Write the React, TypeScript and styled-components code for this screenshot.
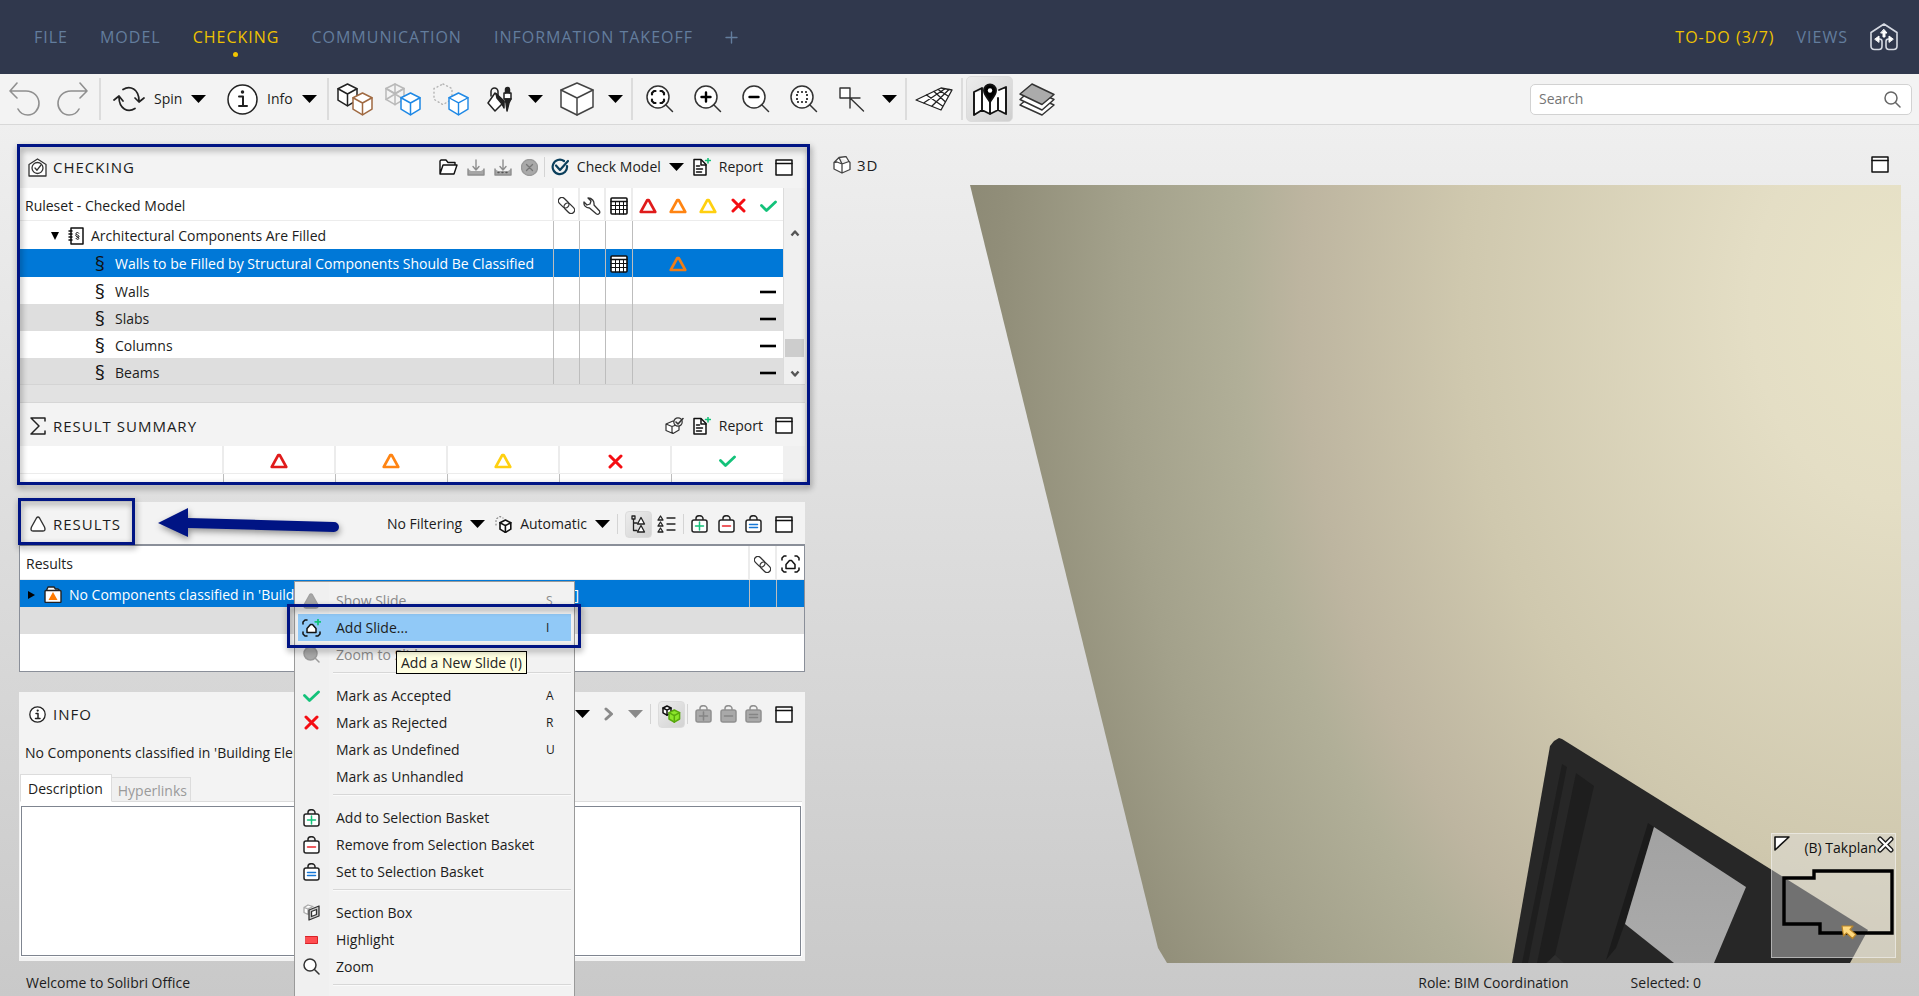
import React from "react";
import styled, { createGlobalStyle, css } from "styled-components";

const navy = "#001484";
const ink = "#1c1c20";

const GlobalStyle = createGlobalStyle`
  *, *::before, *::after { box-sizing: border-box; }
  body {
    margin: 0;
    font-family: "Open Sans", "Noto Sans", sans-serif;
    font-size: 14px;
    line-height: 20px;
    color: ${ink};
  }
  button, input, textarea { font: inherit; color: inherit; }
  button { background: none; border: 0; padding: 0; margin: 0; cursor: default; }
  svg { display: block; flex: none; }
`;

/* ---------- Icons ---------- */

type IconProps = { size?: number; color?: string };

const Svg = ({
  w,
  h = w,
  children,
  sw = 1.5,
  color = "#222",
}: {
  w: number;
  h?: number;
  children: React.ReactNode;
  sw?: number;
  color?: string;
}) => (
  <svg
    width={w}
    height={h}
    viewBox={`0 0 ${w} ${h}`}
    fill="none"
    stroke={color}
    strokeWidth={sw}
    strokeLinecap="round"
    strokeLinejoin="round"
    aria-hidden="true"
  >
    {children}
  </svg>
);

const UndoIcon = () => (
  <Svg w={32} h={36} color="#8f8f8f" sw={1.6}>
    <path d="M8 2 1 10l7 7M1 10h16c8 0 13 6 13 12.500 0 6-5 11.500-11 11.500-5 0-8-2-10-6" />
  </Svg>
);
const RedoIcon = () => (
  <Svg w={32} h={36} color="#8f8f8f" sw={1.6}>
    <path d="m24 2 7 8-7 7M31 10H15C7 10 2 16 2 22.500 2 28.500 7 34 13 34c5 0 8-2 10-6" />
  </Svg>
);
const SpinIcon = () => (
  <Svg w={32} h={26} sw={1.7}>
    <path d="M10 3.500C17-1 26 3 26 15M22 12l4 4 5-4M22 22.500C15 27 6 23 6 11M1 14l5-4 4 5" />
  </Svg>
);
const InfoBigIcon = () => (
  <Svg w={31}>
    <circle cx="15.500" cy="15.500" r="14.500" fill="#fff" />
    <path d="M12 12.500h4V22M12 22h8" strokeWidth="2" />
    <circle cx="15.500" cy="8" r="1" fill="#222" />
  </Svg>
);
const Caret = ({ color = "#000" }: IconProps) => (
  <svg width="15" height="8" viewBox="0 0 15 8" fill={color} aria-hidden="true">
    <path d="M0 0h15L7.500 8z" />
  </svg>
);

const Cube = ({
  x,
  y,
  s,
  stroke = "#222",
  fill = "#fff",
  dash,
  inner = true,
}: {
  x: number;
  y: number;
  s: number;
  stroke?: string;
  fill?: string;
  dash?: string;
  inner?: boolean;
}) => (
  <g transform={`translate(${x} ${y}) scale(${s})`} stroke={stroke} fill={fill} strokeDasharray={dash}>
    <path vectorEffect="non-scaling-stroke" d="M10 0 20 5v12l-10 6L0 17V5z" />
    {inner && <path vectorEffect="non-scaling-stroke" d="M0 5l10 5.500L20 5M10 10.500V23" fill="none" />}
  </g>
);

const CubesBrownIcon = () => (
  <Svg w={37} h={33}>
    <Cube x={1} y={1} s={0.95} />
    <Cube x={16} y={10} s={0.95} stroke="#a06a42" />
  </Svg>
);
const CubesGreyIcon = () => (
  <Svg w={37} h={33}>
    <Cube x={1} y={1} s={0.9} stroke="#b9b9b9" fill="#f4f4f4" />
    <path d="M1 5.500l18 11M19 5.500l-18 11M10 1v10" stroke="#b9b9b9" />
    <Cube x={16} y={10} s={0.95} stroke="#1e88e5" />
  </Svg>
);
const CubesDottedIcon = () => (
  <Svg w={37} h={33} sw={1.4}>
    <Cube x={1} y={1} s={0.9} stroke="#b4b4b4" fill="none" dash="1 3" inner={false} />
    <Cube x={16} y={10} s={0.95} stroke="#1e88e5" />
  </Svg>
);
const PaintIcon = () => (
  <Svg w={26} h={26} sw={1.5}>
    <path d="M4 10V5.500a3.500 3.500 0 0 1 7 0V14" />
    <path d="m8 7 9 9-9 9-7-8z" fill="#fff" />
    <path d="M9 7.500 17 15v7l-2-4-5-6z" fill="#222" />
    <rect x="17" y="7" width="7" height="6" fill="#fff" />
    <path d="M18.500 7V3.500a2 2 0 0 1 4 0V7M18 13l1 4 1 8 2-8 2-4z" fill="#222" />
  </Svg>
);
const BigCubeIcon = () => (
  <Svg w={36} h={34} sw={1.5} color="#444">
    <path d="M18 1 34 8v17l-16 8-16-8V8z" fill="#fff" />
    <path d="m2 8 16 8 16-8M18 16v17" />
  </Svg>
);

const Lens = ({ children }: { children?: React.ReactNode }) => (
  <Svg w={28} h={28} sw={1.5} color="#333">
    <circle cx="12" cy="12" r="11" fill="#fff" />
    <path d="m19.500 19.500 7 7" />
    {children}
  </Svg>
);
const ZoomFitIcon = () => (
  <Lens>
    <path
      d="M6 9.500V8l2-2h1.500M14.500 6H16l2 2v1.500M18 14.500V16l-2 2h-1.500M9.500 18H8l-2-2v-1.500"
      stroke="#111"
      strokeWidth="2.200"
    />
  </Lens>
);
const ZoomInIcon = () => (
  <Lens>
    <path d="M12 7.500v9M7.500 12h9" stroke="#000" strokeWidth="2.400" />
  </Lens>
);
const ZoomOutIcon = () => (
  <Lens>
    <path d="M7.500 12h9" stroke="#000" strokeWidth="2.400" />
  </Lens>
);
const ZoomAreaIcon = () => (
  <Lens>
    <rect x="7" y="7" width="10" height="10" stroke="#111" strokeWidth="1.600" strokeDasharray="2 2" strokeLinecap="butt" />
  </Lens>
);
const PickIcon = () => (
  <Svg w={26} h={25} color="#333" sw={1.4}>
    <path d="M1 1h10v10H1z" fill="#fff" />
    <path d="M11 11h10M11 11v10M11 11l13.500 13" />
  </Svg>
);
const GridIcon = () => (
  <Svg w={38} h={26} sw={1.3}>
    <path d="M1 14 26 2l11 2-11 20z" fill="#fff" />
    <path d="M9 16.800 30 2.800M17 20 34 3.500M19 5.500l11 10M11.500 9l16 11M23 3.500l10 6.500" />
  </Svg>
);
const MapIcon = () => (
  <Svg w={34} h={34} sw={1.9} color="#111">
    <path d="M1 10v23l8-5 8 4 8-4 8 4V5l-6 3z" fill="#fff" stroke="none" />
    <path d="M9 28V6L1 10v23l8-5 8 4V20M17 32l8-4V16M25 28l8 4V5l-7 3" />
    <path d="M17 20c-2-4-6-7-6-11.500A6 6 0 0 1 23 8.500C23 13 19 16 17 20z" fill="#000" />
    <circle cx="17" cy="8.500" r="2.200" fill="#fff" stroke="none" />
  </Svg>
);
const LayersIcon = () => (
  <Svg w={36} h={33} sw={1.5} color="#333">
    <path d="M1 22 13 12l22 10-12 10z" fill="#fff" />
    <path d="M1 16.500 13 6l22 10.500L23 27z" fill="#fff" />
    <path d="M1 11 13 1l22 10.500L23 21.500z" fill="#ababab" />
  </Svg>
);
const SearchIcon = ({ color = "#666" }: IconProps) => (
  <Svg w={17} color={color} sw={1.5}>
    <circle cx="7" cy="7" r="6" fill="#fff" />
    <path d="m11.500 11.500 4.500 4.500" />
  </Svg>
);
const LogoIcon = () => (
  <Svg w={28} h={28} color="#d5d9e2" sw={1.6}>
    <path d="M8 17v-1h1.500c2 0 2.500 1 2.500 2.500V23c0 2-1 3.500-3 3.500H4.500C2 26.500 1 25 1 23V9.500L14 1l13 8.500V23c0 2-1 3.500-3.500 3.500H19c-2 0-3-1.500-3-3.500v-4.500c0-1.500.5-2.500 2.500-2.500H20v1" />
    <path d="M14 6.500 17 10h-2v4h-2v-4h-2zM5 16l4-3v6zM23 16l-4-3v6z" fill="#fff" stroke="#fff" strokeWidth="1" />
  </Svg>
);
const WindowIcon = () => (
  <Svg w={18} h={17} color="#111" sw={1.5}>
    <path d="M1 1h16v15H1z" fill="#fff" />
    <path d="M1 4.500h16" />
  </Svg>
);
const ReportIcon = () => (
  <Svg w={18} h={18} color="#111" sw={1.5}>
    <path d="M1 1.500h7l5 5v10.500H1z" fill="#fff" />
    <path d="M8 2v5h5M3.500 8h3M3.500 11h6M3.500 14h5" />
    <path d="M15 0v5M12.500 2.500h5" stroke="#14c178" />
  </Svg>
);
const FolderIcon = () => (
  <Svg w={19} h={16} color="#111" sw={1.4}>
    <path d="M1 15V2l1-1h5l2 2.500h7V6M1 15 4 6h14l-3 9z" fill="#fff" />
  </Svg>
);
const DownloadIcon = ({ dots }: { dots?: boolean }) => (
  <Svg w={18} h={17} color="#8e8e8e" sw={1.4}>
    <path d="M1 10v6h16v-6l-3 2H4z" fill="#a6a6a6" stroke="none" />
    <path d="M1 10v6h16v-6M9 1v10M6 7.500 9 11l3-3.500" />
    {dots && <path d="M4 13.500h10" stroke="#555" strokeDasharray="1 3" />}
  </Svg>
);
const StopIcon = () => (
  <Svg w={17} color="#777" sw={1.3}>
    <circle cx="8.500" cy="8.500" r="8" fill="#a9a9a9" stroke="#999" />
    <path d="m5.500 5.500 6 6M11.500 5.500l-6 6" />
  </Svg>
);
const CheckCircleIcon = () => (
  <Svg w={18} color="#0b3f5c" sw={2.2}>
    <path d="M16 8a7.200 7.200 0 1 1-3-5" />
    <path d="m5 7.500 4 4.500 8-9" />
  </Svg>
);
const CheckingIcon = () => (
  <Svg w={19} h={19} color="#333" sw={1.3}>
    <path d="M1 6.500 9.500 1 18 6.500V18H1z" fill="#fff" />
    <circle cx="9.500" cy="10" r="5.500" />
    <path d="m7 10 2 2.200L13 7" />
  </Svg>
);
const SigmaIcon = () => (
  <Svg w={16} h={18} color="#222" sw={1.5}>
    <path d="M15 4V1H1l8 8-8 8h14v-3" />
  </Svg>
);
const Triangle = ({ color = "#e01b1b" }: IconProps) => (
  <Svg w={18} h={16} color={color} sw={2.6}>
    <path d="M8.300 2h1.400L16.300 14H1.700z" />
  </Svg>
);
const OutlineTriangle = ({ color = "#333", fill = "#fff" }: { color?: string; fill?: string }) => (
  <Svg w={16} h={16} color={color} sw={1.4}>
    <path d="M6.500 2Q8 0 9.500 2l5 9q1.500 4-1.500 4H3Q0 15 1.500 11z" fill={fill} />
  </Svg>
);
const CrossIcon = () => (
  <Svg w={15} h={15} color="#f40d12" sw={3}>
    <path d="m2 2 11 11M13 2 2 13" />
  </Svg>
);
const CheckIcon = () => (
  <Svg w={17} h={12} color="#13c27a" sw={2.8}>
    <path d="m1.500 5.500 5 5L15.500 2" />
  </Svg>
);
const LinkIcon = () => (
  <Svg w={17} h={17} color="#333" sw={1.3}>
    <g transform="rotate(45 8.500 8.500)">
      <rect x="-1.500" y="5" width="12" height="7" rx="3.500" />
      <rect x="6.500" y="5" width="12" height="7" rx="3.500" />
    </g>
  </Svg>
);
const WrenchIcon = () => (
  <Svg w={18} h={18} color="#333" sw={1.3}>
    <path d="M5 1 8 4 7 7 4 8 1 5c-.500 3 1.500 6 5.500 6l7 6c2 1 4-1 3-3L11 8c.500-4-2-7-6-7z" fill="#fff" />
  </Svg>
);
const TableIcon = () => (
  <Svg w={18} h={18} color="#111" sw={1}>
    <rect x="1" y="1" width="16" height="16" rx="1" fill="#fff" strokeWidth="1.600" />
    <path d="M1 4.500h16" strokeWidth="1.400" />
    <path d="M1 8.500h16M1 12.500h16M5.500 5v12M9.500 5v12M13.500 5v12" />
  </Svg>
);
const DashIcon = () => (
  <Svg w={18} h={4} color="#000" sw={2.6}>
    <path d="M1 2h16" strokeLinecap="butt" />
  </Svg>
);
const BookIcon = () => (
  <Svg w={16} h={18} color="#111" sw={1.5}>
    <rect x="3" y="1" width="12" height="16" fill="#fff" />
    <path d="M1 4h3M1 7h3M1 10h3M1 13h3" />
    <path
      d="M10.800 6.200c-.500-1.200-3-.900-2.800.5.200 1.200 3 1.300 3 2.700 0 1-1.500 1.300-2.200.6M8 7.500c-.8.800 0 1.800 1 2.200 1.500.8 2.200 1 1.800 2-.5 1-2.400.8-2.800-.3"
      strokeWidth="1"
    />
  </Svg>
);
const ModelCheckIcon = () => (
  <Svg w={19} h={17} color="#333" sw={1.2}>
    <path d="M1 7l7-3 6 3v6l-6 3.500L1 13.500zM1 7l6 2.500V16M7 9.500l7-2.500" fill="#fff" />
    <circle cx="13" cy="5" r="4.200" fill="#f4f4f4" />
    <path d="m11 5 2 2 5-5.500" strokeWidth="1.600" />
  </Svg>
);
const AutoCubeIcon = () => (
  <Svg w={17} h={17} color="#111" sw={1.6}>
    <path d="M1 9V3l4-2.500L8 2" stroke="#888" strokeDasharray="1 2.500" strokeWidth="1.200" />
    <Cube x={5} y={4} s={0.54} stroke="#111" />
  </Svg>
);
const TreeIcon = () => (
  <Svg w={15} h={18} color="#222" sw={1.3}>
    <path d="M2.500 4v11.500H6M2.500 8H6M1 1h3v3H1z" />
    <path d="M10 2.500 13.500 9h-7zM10 10.500l3.500 6.500h-7z" fill="#fff" />
  </Svg>
);
const ListIcon = () => (
  <Svg w={19} h={18} color="#222" sw={1.3}>
    <path d="M3.500 1 6 5H1zM3.500 7 6 11H1zM3.500 13 6 17H1zM10 3h8M10 9h8M10 15h8" />
  </Svg>
);
const BagIcon = ({ kind, disabled }: { kind: "add" | "remove" | "set"; disabled?: boolean }) => {
  const tone = disabled ? "#858585" : { add: "#13c27a", remove: "#e8262b", set: "#1677d6" }[kind];
  return (
    <Svg w={17} h={18} color={disabled ? "#909090" : "#222"} sw={1.5}>
      <path d="M5 5V3.500a3.500 2.800 0 0 1 7 0V5" />
      <rect x="1" y="5" width="15" height="12" rx="2" fill={disabled ? "#a9a9a9" : "#fff"} />
      {kind === "add" && <path d="M8.500 7v8M4.500 11h8" stroke={tone} />}
      {kind === "remove" && <path d="M4.500 11h8" stroke={tone} />}
      {kind === "set" && <path d="M4.500 9.500h8M4.500 12.500h8" stroke={tone} />}
    </Svg>
  );
};
const SlideIcon = ({ plus }: { plus?: boolean }) => (
  <Svg w={19} h={18} color="#111" sw={1.5}>
    <path d="M5 1H3L1 3v2M1 13v2l2 2h2M14 17h2l2-2v-2" />
    {!plus && <path d="M14 1h2l2 2v2" />}
    <path d="M5 9.500 8.500 5.500h2L14 9.500v4H5z" fill="#fff" />
    {plus && <path d="M16 0v5.500M13.200 2.800h5.600" stroke="#13c27a" strokeWidth="1.800" />}
  </Svg>
);
const ResultFolderIcon = () => (
  <Svg w={18} h={17} color="#222" sw={1.4}>
    <path d="M2.500 4.500 4 1h6l1.500 2H14l1.500 1.500" fill="#fff" />
    <rect x="1" y="4.500" width="16" height="12" rx="1" fill="#fff" />
    <path d="m9 6 4.500 8h-9z" fill="#ff7a00" stroke="none" />
  </Svg>
);
const InfoSmallIcon = () => (
  <Svg w={17} color="#222" sw={1.3}>
    <circle cx="8.500" cy="8.500" r="7.700" fill="#fff" />
    <path d="M7 7.500h2V12M6.500 12.500h4.500" strokeWidth="1.500" />
    <circle cx="8.700" cy="4.600" r=".5" fill="#222" />
  </Svg>
);
const ChevronRight = () => (
  <Svg w={10} h={14} color="#8a8a8a" sw={3}>
    <path d="m2 2 5.500 5L2 12" />
  </Svg>
);
const GreenCubesIcon = () => (
  <Svg w={19} h={18} sw={1.5}>
    <Cube x={1} y={1} s={0.4} stroke="#111" />
    <Cube x={7} y={5} s={0.53} stroke="#58a80e" fill="#8be52a" />
  </Svg>
);
const GreyLens = () => (
  <Svg w={17} color="#9a9a9a" sw={1.5}>
    <circle cx="7.500" cy="7.500" r="6.500" fill="#a9a9a9" />
    <path d="m12 12 4 4" />
  </Svg>
);
const SectionBoxIcon = () => (
  <Svg w={17} h={17} color="#333" sw={1.3}>
    <path d="M1 3.500 5 1l5 1.500M1 3.500v5l4 2V5zM5 5l4-2" stroke="#aaa" fill="#fff" />
    <path d="M6 6 16 2v10L6 16z" fill="#c9c9c9" />
    <path d="M8.500 7.500 13.500 5.500v5L8.500 12.500z" fill="#fff" />
  </Svg>
);
const HighlightIcon = () => (
  <Svg w={13} h={8} color="#d92227" sw={1}>
    <rect x=".5" y=".5" width="12" height="7" fill="#ff4d50" />
  </Svg>
);
const House3DIcon = () => (
  <Svg w={18} h={18} color="#444" sw={1.3}>
    <path d="M1 6.500 6 1.500l7-1 3 5 1 1v7l-8 3.500L1 13zM6 1.500 9 8l7-2.500M1 6.500 4 6l5 2v9" fill="#fff" />
  </Svg>
);
const ScrollArrow = ({ down }: { down?: boolean }) => (
  <Svg w={10} h={8} color="#555" sw={2.4}>
    <path d={down ? "M1.500 1.500 5 5.500l3.500-4" : "M1.500 6.500 5 2.500l3.500 4"} strokeLinecap="butt" />
  </Svg>
);

/* ---------- Page shell ---------- */

const Page = styled.div`
  position: relative;
  display: flex;
  flex-direction: column;
  height: 100vh;
  overflow: hidden;
  background: linear-gradient(#f0f0f0 100px, #c9c9c9 100%);
`;

const Header = styled.header`
  display: flex;
  align-items: center;
  justify-content: space-between;
  flex: none;
  height: 74px;
  padding: 0 21px 0 34px;
  background: #30384d;
`;
const Nav = styled.nav`
  display: flex;
  align-items: center;
  gap: 32px;
`;
const NavLink = styled.a<{ $active?: boolean }>`
  position: relative;
  color: ${(p) => (p.$active ? "#eec200" : "#637d9d")};
  font-size: 16px;
  letter-spacing: 1px;
  text-decoration: none;
  white-space: nowrap;
`;
const ActiveDot = styled.span`
  position: absolute;
  left: calc(50% - 3px);
  top: 25px;
  width: 5px;
  height: 5px;
  border-radius: 50%;
  background: #f2c600;
`;
const HeaderRight = styled.div`
  display: flex;
  align-items: center;
  gap: 22px;
`;

const Toolbar = styled.div`
  display: flex;
  align-items: center;
  flex: none;
  height: 51px;
  padding: 0 7px 0 2px;
  background: #f3f3f3;
  border-bottom: 1px solid #d8d8d8;
`;
const Tool = styled.button<{ $w: number; $on?: boolean; $start?: boolean }>`
  display: flex;
  align-items: center;
  justify-content: ${(p) => (p.$start ? "flex-start" : "center")};
  gap: 9px;
  flex: none;
  width: ${(p) => p.$w}px;
  height: 46px;
  padding-left: ${(p) => (p.$start ? 9 : 0)}px;
  ${(p) =>
    p.$on &&
    css`
      background: linear-gradient(135deg, #ececec, #cfcfcf);
      border: 1px solid #dcdcdc;
      border-radius: 5px;
    `}
`;
const ToolSep = styled.span<{ $wide?: boolean }>`
  flex: none;
  width: 2px;
  height: 42px;
  margin: 0 3px 0 ${(p) => (p.$wide ? 8 : 3)}px;
  background: #dcdcdc;
`;
const SearchBox = styled.label`
  display: flex;
  align-items: center;
  width: 382px;
  height: 31px;
  margin-left: auto;
  padding: 0 10px 0 8px;
  background: #fff;
  border: 1px solid #d2d2d2;
  border-radius: 5px;
`;
const SearchInput = styled.input`
  flex: 1;
  min-width: 0;
  border: 0;
  outline: 0;
  padding: 0;
  background: none;
  &::placeholder { color: #757575; opacity: 1; }
`;

const Main = styled.main`
  flex: 1;
  min-height: 0;
  display: grid;
  grid-template-columns: minmax(0, 786fr) minmax(0, 1068fr);
  column-gap: 28px;
  padding: 19px 18px 0 19px;
`;
const LeftColumn = styled.div`
  display: flex;
  flex-direction: column;
  min-height: 0;
  padding-bottom: 2px;
`;

/* ---------- Callout marks ---------- */

const Marker = styled.div`
  position: absolute;
  border: 3px solid ${navy};
  filter: drop-shadow(1px 3px 3px rgba(0, 0, 0, 0.45));
  pointer-events: none;
`;
const PanelsMarker = styled(Marker)`
  inset: 0 -5px 0 -2px;
`;
const ResultsMarker = styled(Marker)`
  left: -1px;
  top: -4px;
  width: 117px;
  height: 47px;
`;
const MenuMarker = styled(Marker)`
  left: 287px;
  top: 604px;
  width: 294px;
  height: 44px;
`;
const ArrowMark = styled.div`
  position: absolute;
  left: 136px;
  top: 4px;
  filter: drop-shadow(1px 3px 3px rgba(0, 0, 0, 0.4));
`;

/* ---------- Panels ---------- */

const Framed = styled.div`
  position: relative;
  flex: none;
  height: 341px;
  margin-bottom: 17px;
`;
const PanelHead = styled.div<{ $h: number }>`
  position: relative;
  display: flex;
  align-items: center;
  justify-content: space-between;
  flex: none;
  height: ${(p) => p.$h}px;
  padding: 2px 12px 0 9px;
  background: #f3f3f3;
`;
const PanelTitle = styled.h2`
  display: flex;
  align-items: center;
  gap: 6px;
  margin: 0;
  font-size: 15px;
  font-weight: 400;
  letter-spacing: 1px;
`;
const IconSlot = styled.span<{ $w: number }>`
  display: flex;
  align-items: center;
  justify-content: center;
  width: ${(p) => p.$w}px;
`;
const Actions = styled.div<{ $gap: number }>`
  display: flex;
  align-items: center;
  gap: ${(p) => p.$gap}px;
`;
const IconButton = styled.button<{ $on?: boolean }>`
  display: flex;
  align-items: center;
  gap: 8px;
  white-space: nowrap;
  ${(p) =>
    p.$on &&
    css`
      justify-content: center;
      width: 27px;
      height: 27px;
      background: linear-gradient(135deg, #ececec, #d2d2d2);
      border: 1px solid #dcdcdc;
      border-radius: 4px;
    `}
`;
const WindowButton = styled(IconButton)`
  margin-left: 3px;
`;
const Sep = styled.span`
  width: 1px;
  height: 20px;
  margin: 0 -3px;
  background: #d4d4d4;
`;

const Table = styled.table`
  width: 100%;
  table-layout: fixed;
  border-collapse: collapse;
  text-align: left;
  background: #fff;
  th, td { padding: 2px 0 0; font-weight: 400; white-space: nowrap; }
`;
const CenterBox = styled.div`
  display: flex;
  justify-content: center;
`;
const RuleArea = styled.div`
  display: flex;
  height: 197px;
  overflow: hidden;
  border-bottom: 1px solid #d4d4d4;
`;
const HeadRow = styled.tr<{ $h: number }>`
  height: ${(p) => p.$h}px;
  box-shadow: inset 0 -1px #ececec;
  th + th { border-left: 2px solid #ececec; }
`;
const RuleRow = styled.tr<{ $tone?: "selected" | "alt"; $h: number }>`
  height: ${(p) => p.$h}px;
  background: ${(p) => (p.$tone === "selected" ? "#0078d7" : p.$tone === "alt" ? "#dedede" : "#fff")};
  color: ${(p) => (p.$tone === "selected" ? "#fff" : ink)};
  td + td { border-left: 1px solid #bdbdbd; }
`;
const NameCell = styled.div<{ $indent: number }>`
  display: flex;
  align-items: center;
  gap: 7px;
  padding-left: ${(p) => p.$indent}px;
`;
const SectionSign = styled.span`
  width: 16px;
  text-align: center;
  color: #111;
  font-size: 20px;
`;
const HeadText = styled.span`
  padding-left: 6px;
`;
const StatusCells = styled.div`
  display: grid;
  grid-template-columns: repeat(5, 30px);
  align-items: center;
  justify-items: center;
`;
const StatusSlot = styled.span<{ $col: number }>`
  grid-column: ${(p) => p.$col};
`;
const ScrollTrack = styled.div`
  display: flex;
  flex-direction: column;
  align-items: center;
  flex: none;
  width: 22px;
  padding: 41px 0 6px;
  background: #f0f0f0;
  border-left: 1px solid #dcdcdc;
`;
const ScrollThumb = styled.div`
  width: 19px;
  height: 18px;
  margin: auto 0 13px;
  background: #cdcdcd;
`;
const Splitter = styled.div`
  height: 18px;
  background: #e2e2e2;
  border-bottom: 1px solid #d6d6d6;
`;
const SummaryArea = styled.div`
  height: 38px;
  padding-right: 22px;
  overflow: hidden;
  background: #f0f0f0;
`;
const BodyLineRow = styled.tr`
  height: 16px;
  td + td { border-left: 1px solid #bdbdbd; }
`;

const ResultsPanel = styled.section`
  position: relative;
  flex: none;
  margin-bottom: 20px;
`;
const ResultsBody = styled.div`
  height: 128px;
  background: #fff;
  border: 1px solid #8a8f99;
  border-top-width: 2px;
`;
const ClippedName = styled.span`
  display: flex;
  justify-content: space-between;
  width: 510px;
`;

const InfoPanel = styled.section`
  display: flex;
  flex-direction: column;
  flex: 1;
  min-height: 0;
  background: #f3f3f3;
`;
const InfoText = styled.p`
  margin: 0;
  padding: 9px 0 12px 6px;
`;
const Tabs = styled.div`
  display: flex;
  align-items: flex-end;
  flex: none;
  height: 27px;
  margin: 0 3px 0 1px;
  border-bottom: 1px solid #dcdcdc;
`;
const Tab = styled.button<{ $active?: boolean }>`
  height: ${(p) => (p.$active ? 28 : 25)}px;
  margin-bottom: -1px;
  padding: 2px ${(p) => (p.$active ? 8 : 3)}px 0 ${(p) => (p.$active ? 7 : 6)}px;
  color: ${(p) => (p.$active ? ink : "#9a9a9a")};
  background: ${(p) => (p.$active ? "#fff" : "#f0f0f0")};
  border: 1px solid #dcdcdc;
  border-bottom-color: ${(p) => (p.$active ? "#fff" : "#dcdcdc")};
  border-left-width: ${(p) => (p.$active ? 1 : 0)}px;
`;
const TabBody = styled.div`
  display: flex;
  flex: 1;
  min-height: 0;
  margin: 0 3px 4px 1px;
  padding: 4px 1px 1px;
  background: #fff;
`;
const DescriptionBox = styled.textarea`
  flex: 1;
  resize: none;
  outline: 0;
  background: #fff;
  border: 1px solid #7f8590;
`;

/* ---------- 3D view ---------- */

const ViewPanel = styled.section`
  display: flex;
  flex-direction: column;
  min-height: 0;
`;
const ViewHead = styled.div`
  display: flex;
  align-items: center;
  justify-content: space-between;
  height: 41px;
  padding: 0 12px 0 0;
`;
const Viewport = styled.div`
  position: relative;
  flex: 1;
  min-height: 0;
`;
const Scene = styled.svg`
  width: 100%;
  height: 100%;
`;
const MiniMap = styled.div`
  position: absolute;
  right: 5px;
  bottom: 5px;
  width: 125px;
  height: 125px;
  background: rgba(226, 226, 226, 0.4);
  border: 1px solid rgba(255, 255, 255, 0.45);
`;
const MiniTitle = styled.div`
  display: flex;
  align-items: flex-start;
  justify-content: space-between;
  height: 34px;
  padding: 2px 1px 0 2px;
  color: #111;
  span { padding: 2px 0 0 14px; }
`;

const StatusBar = styled.footer`
  display: flex;
  justify-content: space-between;
  flex: none;
  height: 33px;
  padding: 10px 218px 0 26px;
`;
const StatusRight = styled.div`
  display: flex;
  gap: 62px;
`;

/* ---------- Context menu ---------- */

const Menu = styled.ul`
  position: absolute;
  left: 294px;
  top: 581px;
  width: 281px;
  margin: 0;
  padding: 5px 3px 20px;
  list-style: none;
  background: linear-gradient(90deg, #f0f0f0 34px, #f2f2f2 34px);
  border: 1px solid #9a9a9a;
`;
const MenuItem = styled.button<{ $active?: boolean; $disabled?: boolean }>`
  display: grid;
  grid-template-columns: 26px 1fr 28px;
  column-gap: 12px;
  align-items: center;
  width: 100%;
  height: 27px;
  text-align: left;
  white-space: nowrap;
  background: ${(p) => (p.$active ? "#91c9f7" : "none")};
  color: ${(p) => (p.$disabled ? "#8b8b8b" : ink)};
`;
const Shortcut = styled.span`
  font-size: 12px;
  padding-left: 3px;
`;
const MenuLine = styled.li`
  height: 2px;
  margin: 4px 0 8px 35px;
  background: linear-gradient(#d7d7d7 50%, #fafafa 50%);
`;
const Tooltip = styled.div`
  position: absolute;
  left: 396px;
  top: 651px;
  height: 23px;
  padding: 1px 4px 0;
  background: #ffffe1;
  border: 1px solid #000;
  color: #222;
  white-space: nowrap;
`;

type MenuEntry = { label: string; key?: string; icon?: React.ReactNode; active?: boolean; disabled?: boolean } | null;

const menuEntries: MenuEntry[] = [
  { label: "Show Slide...", key: "S", icon: <OutlineTriangle color="#a0a0a0" fill="#a6a6a6" />, disabled: true },
  { label: "Add Slide...", key: "I", icon: <SlideIcon plus />, active: true },
  { label: "Zoom to Slide", icon: <GreyLens />, disabled: true },
  null,
  { label: "Mark as Accepted", key: "A", icon: <CheckIcon /> },
  { label: "Mark as Rejected", key: "R", icon: <CrossIcon /> },
  { label: "Mark as Undefined", key: "U" },
  { label: "Mark as Unhandled" },
  null,
  { label: "Add to Selection Basket", icon: <BagIcon kind="add" /> },
  { label: "Remove from Selection Basket", icon: <BagIcon kind="remove" /> },
  { label: "Set to Selection Basket", icon: <BagIcon kind="set" /> },
  null,
  { label: "Section Box", icon: <SectionBoxIcon /> },
  { label: "Highlight", icon: <HighlightIcon /> },
  { label: "Zoom", icon: <SearchIcon color="#333" /> },
  null,
];

const rules = [
  { name: "Walls", tone: undefined },
  { name: "Slabs", tone: "alt" as const },
  { name: "Columns", tone: undefined },
  { name: "Beams", tone: "alt" as const },
];

const severities = [
  <Triangle key="c" color="#e01b1b" />,
  <Triangle key="m" color="#ff8412" />,
  <Triangle key="l" color="#ffd010" />,
  <CrossIcon key="x" />,
  <CheckIcon key="k" />,
];

const MainToolbar = () => (
  <Toolbar>
    <Tool $w={46} aria-label="Undo"><UndoIcon /></Tool>
    <Tool $w={48} aria-label="Redo"><RedoIcon /></Tool>
    <ToolSep />
    <Tool $w={114} $start><SpinIcon />Spin<Caret /></Tool>
    <Tool $w={106} $start><InfoBigIcon />Info<Caret /></Tool>
    <ToolSep />
    <Tool $w={47} aria-label="Show components"><CubesBrownIcon /></Tool>
    <Tool $w={48} aria-label="Show transparent"><CubesGreyIcon /></Tool>
    <Tool $w={48} aria-label="Hide others"><CubesDottedIcon /></Tool>
    <Tool $w={49} aria-label="Colouring"><PaintIcon /></Tool>
    <Tool $w={22} aria-label="Colouring options"><Caret /></Tool>
    <Tool $w={61} aria-label="View"><BigCubeIcon /></Tool>
    <Tool $w={16} aria-label="View options"><Caret /></Tool>
    <ToolSep $wide />
    <Tool $w={48} aria-label="Zoom to fit"><ZoomFitIcon /></Tool>
    <Tool $w={48} aria-label="Zoom in"><ZoomInIcon /></Tool>
    <Tool $w={48} aria-label="Zoom out"><ZoomOutIcon /></Tool>
    <Tool $w={48} aria-label="Zoom to area"><ZoomAreaIcon /></Tool>
    <Tool $w={48} aria-label="Dimension"><PickIcon /></Tool>
    <Tool $w={26} aria-label="Dimension options"><Caret /></Tool>
    <ToolSep />
    <Tool $w={48} aria-label="Grid"><GridIcon /></Tool>
    <ToolSep />
    <Tool $w={47} $on aria-label="Map"><MapIcon /></Tool>
    <Tool $w={48} aria-label="Layers"><LayersIcon /></Tool>
    <SearchBox>
      <SearchInput placeholder="Search" aria-label="Search" />
      <SearchIcon />
    </SearchBox>
  </Toolbar>
);

const CheckingPanel = () => (
  <section>
    <PanelHead $h={44}>
      <PanelTitle><CheckingIcon />CHECKING</PanelTitle>
      <Actions $gap={9}>
        <IconButton aria-label="Open"><FolderIcon /></IconButton>
        <IconButton aria-label="Import"><DownloadIcon /></IconButton>
        <IconButton aria-label="Import all"><DownloadIcon dots /></IconButton>
        <IconButton aria-label="Stop"><StopIcon /></IconButton>
        <Sep />
        <IconButton><CheckCircleIcon />Check Model<Caret /></IconButton>
        <IconButton><ReportIcon />Report</IconButton>
        <WindowButton aria-label="Maximize"><WindowIcon /></WindowButton>
      </Actions>
    </PanelHead>
    <RuleArea>
      <Table>
        <colgroup>
          <col />
          <col width="26" />
          <col width="26" />
          <col width="27" />
          <col width="151" />
        </colgroup>
        <thead>
          <HeadRow $h={33}>
            <th><HeadText>Ruleset - Checked Model</HeadText></th>
            <th><CenterBox><LinkIcon /></CenterBox></th>
            <th><CenterBox><WrenchIcon /></CenterBox></th>
            <th><CenterBox><TableIcon /></CenterBox></th>
            <th><StatusCells>{severities}</StatusCells></th>
          </HeadRow>
        </thead>
        <tbody>
          <RuleRow $h={28}>
            <td>
              <NameCell $indent={29}>
                <IconSlot $w={13}>
                  <svg width="8" height="8" viewBox="0 0 8 8"><path d="M0 0h8L4 8z" /></svg>
                </IconSlot>
                <BookIcon />
                Architectural Components Are Filled
              </NameCell>
            </td>
            <td /><td /><td /><td />
          </RuleRow>
          <RuleRow $tone="selected" $h={28}>
            <td><NameCell $indent={73}><SectionSign>§</SectionSign>Walls to be Filled by Structural Components Should Be Classified</NameCell></td>
            <td /><td />
            <td><CenterBox><TableIcon /></CenterBox></td>
            <td><StatusCells><StatusSlot $col={2}><Triangle color="#f07d16" /></StatusSlot></StatusCells></td>
          </RuleRow>
          {rules.map((r) => (
            <RuleRow key={r.name} $tone={r.tone} $h={27}>
              <td><NameCell $indent={73}><SectionSign>§</SectionSign>{r.name}</NameCell></td>
              <td /><td /><td />
              <td><StatusCells><StatusSlot $col={5}><DashIcon /></StatusSlot></StatusCells></td>
            </RuleRow>
          ))}
        </tbody>
      </Table>
      <ScrollTrack>
        <ScrollArrow />
        <ScrollThumb />
        <ScrollArrow down />
      </ScrollTrack>
    </RuleArea>
  </section>
);

const SummaryPanel = () => (
  <section>
    <PanelHead $h={43}>
      <PanelTitle><IconSlot $w={19}><SigmaIcon /></IconSlot>RESULT SUMMARY</PanelTitle>
      <Actions $gap={9}>
        <IconButton aria-label="Model check"><ModelCheckIcon /></IconButton>
        <IconButton><ReportIcon />Report</IconButton>
        <WindowButton aria-label="Maximize"><WindowIcon /></WindowButton>
      </Actions>
    </PanelHead>
    <SummaryArea>
      <Table>
        <colgroup>
          <col />
          {severities.map((_, i) => <col key={i} width="112" />)}
        </colgroup>
        <thead>
          <HeadRow $h={28}>
            <th />
            {severities.map((s, i) => <th key={i}><CenterBox>{s}</CenterBox></th>)}
          </HeadRow>
        </thead>
        <tbody>
          <BodyLineRow><td />{severities.map((_, i) => <td key={i} />)}</BodyLineRow>
        </tbody>
      </Table>
    </SummaryArea>
  </section>
);

const Results = () => (
  <ResultsPanel>
    <PanelHead $h={42}>
      <PanelTitle><IconSlot $w={19}><OutlineTriangle /></IconSlot>RESULTS</PanelTitle>
      <Actions $gap={10}>
        <IconButton>No Filtering<Caret /></IconButton>
        <IconButton><AutoCubeIcon />Automatic<Caret /></IconButton>
        <Sep />
        <Actions $gap={5}>
          <IconButton $on aria-label="Tree view"><TreeIcon /></IconButton>
          <IconButton aria-label="List view"><ListIcon /></IconButton>
        </Actions>
        <Sep />
        <IconButton aria-label="Add to basket"><BagIcon kind="add" /></IconButton>
        <IconButton aria-label="Remove from basket"><BagIcon kind="remove" /></IconButton>
        <IconButton aria-label="Set to basket"><BagIcon kind="set" /></IconButton>
        <WindowButton aria-label="Maximize"><WindowIcon /></WindowButton>
      </Actions>
    </PanelHead>
    <ResultsBody>
      <Table>
        <colgroup>
          <col />
          <col width="27" />
          <col width="28" />
        </colgroup>
        <thead>
          <HeadRow $h={34}>
            <th><HeadText>Results</HeadText></th>
            <th><CenterBox><LinkIcon /></CenterBox></th>
            <th><CenterBox><SlideIcon /></CenterBox></th>
          </HeadRow>
        </thead>
        <tbody>
          <RuleRow $tone="selected" $h={27}>
            <td>
              <NameCell $indent={6}>
                <IconSlot $w={11}>
                  <svg width="7" height="8" viewBox="0 0 7 8"><path d="M0 0v8l7-4z" /></svg>
                </IconSlot>
                <ResultFolderIcon />
                <ClippedName><span>No Components classified in 'Building Elements</span><span>]</span></ClippedName>
              </NameCell>
            </td>
            <td /><td />
          </RuleRow>
          <RuleRow $tone="alt" $h={27}><td colSpan={3} /></RuleRow>
        </tbody>
      </Table>
    </ResultsBody>
    <ResultsMarker />
    <ArrowMark>
      <svg width="186" height="36" viewBox="0 0 186 36" fill={navy} aria-hidden="true">
        <path d="M3 17 33 2v10L179 16a5 5 0 0 1 0 10L33 22v9z" />
      </svg>
    </ArrowMark>
  </ResultsPanel>
);

const Info = () => (
  <InfoPanel>
    <PanelHead $h={42}>
      <PanelTitle><IconSlot $w={19}><InfoSmallIcon /></IconSlot>INFO</PanelTitle>
      <Actions $gap={10}>
        <Actions $gap={14}>
          <IconButton aria-label="Back options"><Caret /></IconButton>
          <IconButton aria-label="Forward"><ChevronRight /></IconButton>
          <IconButton aria-label="Forward options"><Caret color="#8a8a8a" /></IconButton>
        </Actions>
        <Sep />
        <Actions $gap={5}>
          <IconButton $on aria-label="Follow selection"><GreenCubesIcon /></IconButton>
          <Sep />
        </Actions>
        <Actions $gap={8}>
          <IconButton disabled aria-label="Add"><BagIcon kind="add" disabled /></IconButton>
          <IconButton disabled aria-label="Remove"><BagIcon kind="remove" disabled /></IconButton>
          <IconButton disabled aria-label="Set"><BagIcon kind="set" disabled /></IconButton>
        </Actions>
        <WindowButton aria-label="Maximize"><WindowIcon /></WindowButton>
      </Actions>
    </PanelHead>
    <InfoText>No Components classified in 'Building Elements</InfoText>
    <Tabs role="tablist">
      <Tab $active role="tab" aria-selected="true">Description</Tab>
      <Tab role="tab" aria-selected="false">Hyperlinks</Tab>
    </Tabs>
    <TabBody><DescriptionBox aria-label="Description" readOnly /></TabBody>
  </InfoPanel>
);

const View3D = () => (
  <ViewPanel>
    <ViewHead>
      <PanelTitle><House3DIcon />3D</PanelTitle>
      <IconButton aria-label="Maximize"><WindowIcon /></IconButton>
    </ViewHead>
    <Viewport>
      <Scene viewBox="0 0 1068 778" preserveAspectRatio="xMidYMid slice" aria-hidden="true">
        <defs>
          <radialGradient
            id="wall"
            gradientUnits="userSpaceOnUse"
            cx="0"
            cy="0"
            r="1000"
            gradientTransform="translate(1068 120) scale(1 1.300)"
          >
            <stop offset="0" stopColor="#e9e4c8" />
            <stop offset="0.150" stopColor="#e4dec5" />
            <stop offset="0.440" stopColor="#cfc8ae" />
            <stop offset="0.600" stopColor="#bdb5a0" />
            <stop offset="0.660" stopColor="#b1af98" />
            <stop offset="0.780" stopColor="#a3a18b" />
            <stop offset="0.900" stopColor="#918e79" />
            <stop offset="1" stopColor="#868370" />
          </radialGradient>
          <linearGradient id="pane" x1="0" y1="0" x2="0" y2="1">
            <stop offset="0" stopColor="#a2a2a2" />
            <stop offset="1" stopColor="#ababab" />
          </linearGradient>
        </defs>
        <path d="M137 0H1068V778H334L325 763z" fill="url(#wall)" />
        <path d="M679 778 717 561l4-5 5-3 3 1L1035 745 1017 778z" fill="#272727" />
        <path d="M729 579l5 3-39 196h-6zM743 588l18 13-39 169-9 8h-9z" fill="#1e1e1e" />
        <path d="M722 770l9 8h-17z" fill="#2e2e2e" />
        <path d="M815 638l6 4-29 96-9 25-10 12z" fill="#1b1b1b" />
        <path d="M821 642 913 702 881 778H841L792 739z" fill="url(#pane)" />
      </Scene>
      <MiniMap>
        <MiniTitle>
          <Svg w={16} h={16} color="#111" sw={1.6}>
            <path d="M1 1h14L1 14z" fill="#fff" />
          </Svg>
          <span>(B) Takplan</span>
          <Svg w={17} h={17}>
            <path d="m3 3 11 11M14 3 3 14" stroke="#222" strokeWidth="5" />
            <path d="m3 3 11 11M14 3 3 14" stroke="#fff" strokeWidth="2.200" />
          </Svg>
        </MiniTitle>
        <Svg w={123} h={72} color="#000" sw={3.4}>
          <path d="M12 10h30V3h78v62H48v-9H12z" strokeLinecap="butt" strokeLinejoin="miter" />
          <path d="m70 58 11 0-3 3.500 6 5-3.500 4-6-5.500-3 3z" fill="#ffd97e" stroke="#b98528" strokeWidth="1.200" />
        </Svg>
      </MiniMap>
    </Viewport>
  </ViewPanel>
);

const ContextMenu = () => (
  <Menu role="menu">
    {menuEntries.map((e, i) =>
      e ? (
        <li key={i} role="none">
          <MenuItem role="menuitem" $active={e.active} $disabled={e.disabled} disabled={e.disabled}>
            <CenterBox>{e.icon}</CenterBox>
            <span>{e.label}</span>
            <Shortcut>{e.key}</Shortcut>
          </MenuItem>
        </li>
      ) : (
        <MenuLine key={i} role="separator" />
      )
    )}
  </Menu>
);

export default function App() {
  return (
    <Page>
      <GlobalStyle />
      <Header>
        <Nav>
          <NavLink href="#file">FILE</NavLink>
          <NavLink href="#model">MODEL</NavLink>
          <NavLink href="#checking" $active>CHECKING<ActiveDot /></NavLink>
          <NavLink href="#communication">COMMUNICATION</NavLink>
          <NavLink href="#takeoff">INFORMATION TAKEOFF</NavLink>
          <NavLink as="button" aria-label="Add layout">
            <Svg w={13} color="#637d9d" sw={1.4}><path d="M6.500 1v11M1 6.500h11" /></Svg>
          </NavLink>
        </Nav>
        <HeaderRight>
          <NavLink href="#todo" $active>TO-DO (3/7)</NavLink>
          <NavLink href="#views">VIEWS</NavLink>
          <LogoIcon />
        </HeaderRight>
      </Header>
      <MainToolbar />
      <Main>
        <LeftColumn>
          <Framed>
            <CheckingPanel />
            <Splitter />
            <SummaryPanel />
            <PanelsMarker />
          </Framed>
          <Results />
          <Info />
        </LeftColumn>
        <View3D />
      </Main>
      <StatusBar>
        <span>Welcome to Solibri Office</span>
        <StatusRight>
          <span>Role: BIM Coordination</span>
          <span>Selected: 0</span>
        </StatusRight>
      </StatusBar>
      <ContextMenu />
      <Tooltip role="tooltip">Add a New Slide (I)</Tooltip>
      <MenuMarker />
    </Page>
  );
}
